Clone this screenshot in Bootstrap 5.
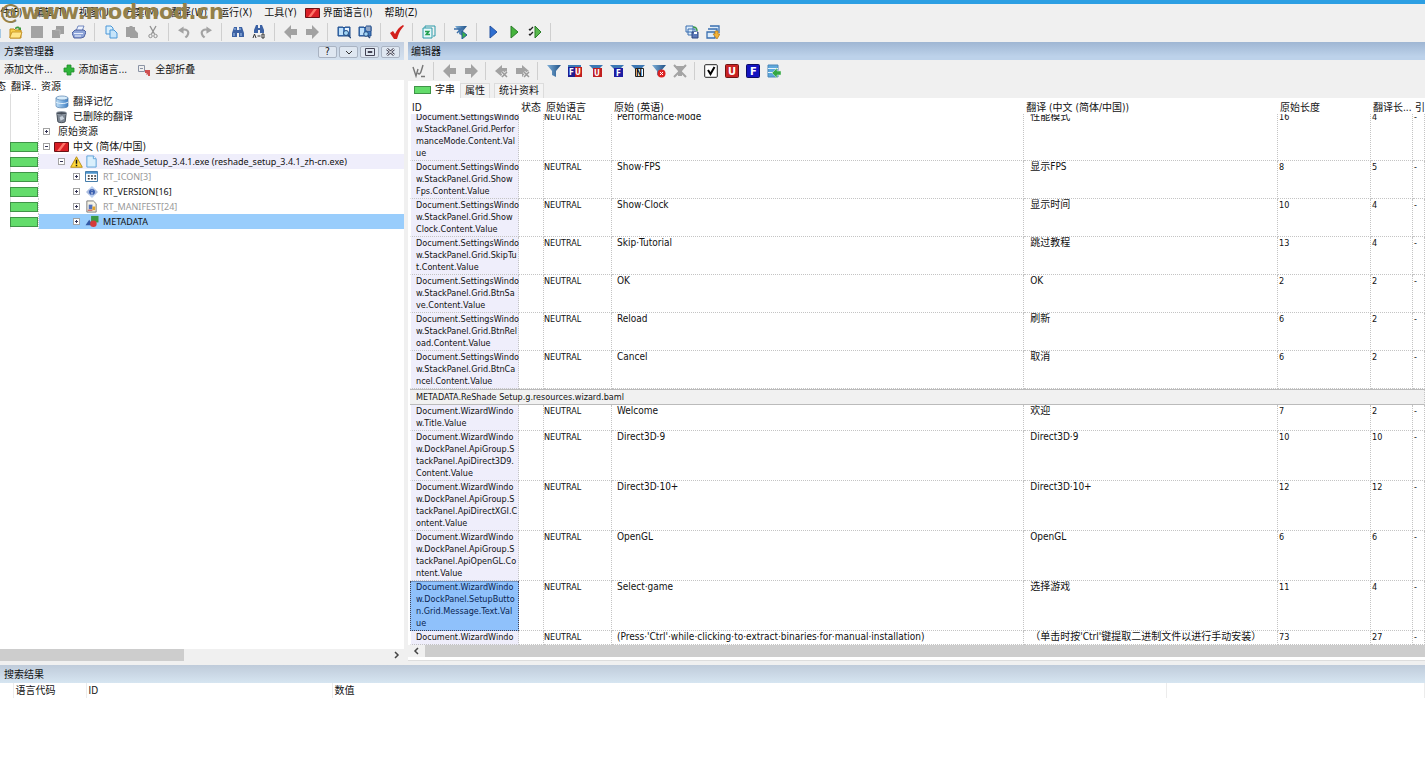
<!DOCTYPE html>
<html lang="zh-CN">
<head>
<meta charset="utf-8">
<meta name="viewport" content="width=device-width, initial-scale=1">
<title>方案管理器</title>
<link href="https://cdn.jsdelivr.net/npm/bootstrap@5.3.0/dist/css/bootstrap.min.css" rel="stylesheet">
<style>
body{font-family:"DejaVu Sans Condensed","Noto Sans CJK SC",sans-serif;font-size:10px;line-height:12px;color:#111;background:#f0f0f0}
button{font:inherit;color:inherit;border:0;background:none;padding:0;white-space:nowrap}
svg{display:block;flex:none}
.titlestrip{height:4px;background:#2d9fe3}
.menus{height:17px;gap:12px}
.menus a{color:#111;text-decoration:none;white-space:nowrap}
.menus a:first-child{margin-left:-10px}
.menus .flagged{margin-left:-4px;gap:3px}
.watermark{left:0;top:-4px;font:bold 21px/24px "DejaVu Sans",sans-serif;color:#93804a;pointer-events:none}
.tools{height:21px}
.tools button{width:21px;height:21px;display:flex;align-items:center;justify-content:center;flex:none}
.tools .bar{width:1px;height:18px;margin:0 5px 0 4px;background:#cfcfcf;flex:none}
.maintools{margin-left:-16px}
.maintools .bar{margin:0 5px}
.maintools .far{margin-right:130px}
.workspace{display:grid;grid-template-columns:404px minmax(0,1fr);column-gap:4px}
.caption{font-size:10px;height:18px;padding:2px 0 0 4px;background:linear-gradient(#c3cfe0,#d4e1ef);flex:none}
.caption.active-one{background:linear-gradient(#9fb6d3,#bdd2ea 80%);padding-left:3px}
.caption.low{background:linear-gradient(#bfcbda,#d6e5f1)}
.caption .wbtn{width:19px;height:12px;border:1px solid #a9b3c2;border-radius:2px;background:#dfe7f1;display:flex;align-items:center;justify-content:center}
.lefttools{height:20px;gap:10px}
.lefttools button{gap:4px}
.treehead{height:14px}
.treehead span{white-space:nowrap;overflow:hidden}
.tree{background:#fff;position:relative}
.node{height:15px}
.node .state{width:39px;padding-left:10px;flex:none;height:15px;border-right:1px dotted #ccc;background:linear-gradient(90deg,transparent 10px,#ddd 10px,#ddd 11px,transparent 11px);display:flex;align-items:center}
.green{display:block;width:28px;height:10px;background:#63dc6b;border:1px solid #3f9447}
.green.short{width:17px;height:8px}
.node .body{height:15px;min-width:0}
.node.soft .body{background:#efeefb}
.node.sel .body{background:#99cdfc}
.cell{width:15px;flex:none;display:flex;justify-content:center}
.lbl{white-space:nowrap;padding-left:4px}
.latin{font-family:"Noto Sans","Noto Sans CJK SC",sans-serif;font-size:9px}
.dim{color:#999}
.exp{width:7px;height:7px;border:1px solid #a3a3a3;display:block;position:relative;background:#fff}
.exp::before{content:"";position:absolute;left:1px;right:1px;top:2px;height:1px;background:#335}
.exp.plus::after{content:"";position:absolute;top:1px;bottom:1px;left:2px;width:1px;background:#335}
.scroller{height:12px;background:#f0f0f0;flex:none}
.thumb{background:#cdcdcd;height:12px}
.tabs{height:17px}
.tabs button{height:15px;padding:0 4px;border:1px solid #dcdcdc;border-bottom:0;background:#f3f3f3}
.tabs button.on{height:17px;background:#fff;border-color:#fff;padding:0 4px 0 5px;display:flex;gap:4px;align-items:center}
.gridwrap{overflow:hidden;background:#fff;padding-left:2px}
.strings{table-layout:fixed;width:100%;border-collapse:separate;border-spacing:0}
.strings th{position:sticky;top:0;background:#fff;font-weight:400;height:16px;padding:4px 0 0 2px;line-height:12px;white-space:nowrap;overflow:hidden;z-index:1}
.strings td{vertical-align:top;padding:0 0 1px;border-bottom:1px dotted #c4c4c4;border-right:1px dotted #c4c4c4;font-size:9px;line-height:12px;white-space:nowrap;overflow:hidden}
.strings td:nth-child(1){background:#efeefb;padding-left:5px;border-left:1px solid #fff;overflow:visible}
.strings td:nth-child(2){overflow:visible}
.strings td:nth-child(4),.strings td:nth-child(5){font-size:10px;padding-left:5px}
.strings td:nth-child(5){padding-left:6px}
.strings td:nth-child(n+6){padding-left:1px}
.strings tr.pick td:nth-child(1){background:#8fc1fb;box-shadow:inset 0 1px #6b8fc0;border:1px dotted #445;border-top:0;color:#0a2450}
.strings tr.group td{background:#f1f1f1;border-top:1px solid #bbb;border-bottom:1px solid #bbb;padding:1px 0 1px 6px;border-left:0}
.panelend{height:4px;background:#fff;margin-bottom:4px;border-bottom:1px solid #ddd;flex:none}
.results{height:113px;background:#fff}
.found{table-layout:fixed;width:100%;background:#fff}
.found th{font-weight:400;padding:0 0 0 2px;height:15px;white-space:nowrap;border-right:1px solid #ececec}
</style>
</head>
<body class="vh-100 d-flex flex-column overflow-hidden">
<svg width="0" height="0" class="position-absolute" aria-hidden="true">
 <defs>
 <linearGradient id="gb" x1="0" x2="1"><stop offset="0" stop-color="#bfe0f8"/><stop offset="1" stop-color="#3f7fc4"/></linearGradient>
 <linearGradient id="gf" x1="0" x2="1"><stop offset="0" stop-color="#7fb0d8"/><stop offset="1" stop-color="#1d4f86"/></linearGradient>
 <symbol id="doc" viewBox="0 0 14 14"><path d="M2 1h7l3 3v9H2z" fill="#d9effc" stroke="#5aa0d8"/><path d="M9 1v3h3" fill="#fff" stroke="#5aa0d8"/></symbol>
 <symbol id="open" viewBox="0 0 14 14"><path d="M1 4h4l1 1h6v8H1z" fill="#f7cf4a" stroke="#c08a1c"/><path d="M1 12l2-5h10l-2 6H1z" fill="#ffe68a" stroke="#c08a1c" stroke-width=".8"/><path d="M6 4c0-3 4-3 5-1l1-1v3H9l1-1c-1-1-2-1-3 0z" fill="#3f9a3f"/></symbol>
 <symbol id="save" viewBox="0 0 14 14"><path d="M1 1h12v12H1z" fill="#a3a3a3"/></symbol>
 <symbol id="saveall" viewBox="0 0 14 14"><path d="M5 1h8v8H9v4H1V5h4z" fill="#a0a0a0"/><path d="M4 5h5v5" fill="none" stroke="#b4b4b4"/></symbol>
 <symbol id="print" viewBox="0 0 14 14"><path d="M4 6l2-5h6l-2 5z" fill="#eef4ff" stroke="#5570b0" stroke-width=".8"/><path d="M0 8l3-3h9l2 2-2 5-3 1H2z" fill="#8fa5d8" stroke="#43589a" stroke-width=".9"/><path d="M2 8.500h9M3 11h6" stroke="#e8eefc"/></symbol>
 <symbol id="copy" viewBox="0 0 14 14"><path d="M2 1h5l2 2v6H2z" fill="#d9effc" stroke="#4a97d8"/><path d="M6 5h4l3 3v5H6z" fill="#c6e4fa" stroke="#4a97d8"/></symbol>
 <symbol id="paste" viewBox="0 0 14 14"><path d="M1 2h3l1-1h2l1 1h2v3l3 3v5H5v-1H1z" fill="#a0a0a0"/></symbol>
 <symbol id="cut" viewBox="0 0 14 14"><path d="M4 1l4.500 8M10 1L5.500 9" stroke="#909090" stroke-width="1.300"/><circle cx="4.500" cy="11" r="1.700" fill="none" stroke="#909090"/><circle cx="9.500" cy="11" r="1.700" fill="none" stroke="#909090"/></symbol>
 <symbol id="undo" viewBox="0 0 14 14"><path d="M3 5c6-2 10 1 7 6l-2 2" fill="none" stroke="#a3a3a3" stroke-width="2.300"/><path d="M0 5l6-4v8z" fill="#a3a3a3"/></symbol>
 <symbol id="redo" viewBox="0 0 14 14"><path d="M11 5c-6-2-10 1-7 6l2 2" fill="none" stroke="#a3a3a3" stroke-width="2.300"/><path d="M14 5L8 1v8z" fill="#a3a3a3"/></symbol>
 <symbol id="find" viewBox="0 0 14 14"><path d="M3 2h3v3h2V2h3l2 6v4H8V8H6v4H1V8z" fill="#3c62a4"/><path d="M3 8v3M10 8v3M4 3v2M9 3v2" stroke="#a9c8f0"/></symbol>
 <symbol id="findab" viewBox="0 0 14 14"><path d="M4 0h2v3h2V0h2l2 5v3H8V5H6v3H2V5z" fill="#3c62a4"/><path d="M1 13l1.500-4L4 13M5.500 11h3M10 9v4h2V9z" fill="none" stroke="#333"/></symbol>
 <symbol id="left" viewBox="0 0 14 14"><path d="M0 7l7-7v4h6v6H7v4z" fill="#a2a2a2"/></symbol>
 <symbol id="right" viewBox="0 0 14 14"><path d="M14 7L7 0v4H1v6h6v4z" fill="#a2a2a2"/></symbol>
 <symbol id="leftx" viewBox="0 0 14 14"><path d="M0 7l7-6v3h5v6H7v3z" fill="#a2a2a2"/><path d="M7 8l5 5M12 8l-5 5" stroke="#f0f0f0" stroke-width="3"/><path d="M7 8l5 5M12 8l-5 5" stroke="#999" stroke-width="1.500"/></symbol>
 <symbol id="rightx" viewBox="0 0 14 14"><path d="M13 7L6 1v3H0v6h6v3z" fill="#a2a2a2"/><path d="M8 8l5 5M13 8l-5 5" stroke="#f0f0f0" stroke-width="3"/><path d="M8 8l5 5M13 8l-5 5" stroke="#999" stroke-width="1.500"/></symbol>
 <symbol id="book" viewBox="0 0 14 14"><path d="M1 2h5l1 1 1-1h5v9H1z" fill="#3f78bd" stroke="#234f8c"/><path d="M2 3h4v7H2z" fill="#bfe0fa"/><path d="M8 3h4v5H8z" fill="#e9f4ff"/><circle cx="9" cy="8" r="2.500" fill="#9ed4f6" stroke="#25497c"/><path d="M11 10l3 3" stroke="#25497c" stroke-width="1.500"/></symbol>
 <symbol id="book2" viewBox="0 0 14 14"><path d="M1 2h5l1 1 1-1h5v9H1z" fill="#3f78bd" stroke="#234f8c"/><path d="M2 3h4v7H2z" fill="#bfe0fa"/><path d="M8 1h5v5H8z" fill="#fff" stroke="#234f8c"/><path d="M10 1v4M12 1v4" stroke="#234f8c"/><circle cx="8" cy="9" r="2.300" fill="#9ed4f6" stroke="#25497c"/><path d="M10 11l2 2" stroke="#25497c" stroke-width="1.500"/></symbol>
 <symbol id="tick" viewBox="0 0 14 14"><path d="M0 8l3-2 2 3C7 5 9 2 13 0l1 1c-4 4-5 7-7 13H4z" fill="#d3201c"/></symbol>
 <symbol id="sync" viewBox="0 0 14 14"><path d="M1 3h9v10H1z" fill="#e4f8fa" stroke="#2a9aa8"/><path d="M3 3V1h10v10h-2" fill="none" stroke="#2a9aa8"/><path d="M3 6.500h4L5 9M8 9.500H4l2-2.500" fill="none" stroke="#24a050" stroke-width="1.300"/></symbol>
 <symbol id="fplus" viewBox="0 0 14 14"><path d="M1 1h12L9 6v5L5 9V6z" fill="url(#gf)"/><path d="M0 4h6M3 8l5-5" stroke="#3c6fa8" stroke-width="1.500"/><path d="M8 6l5 4-5 4z" fill="#39b04a" stroke="#245c9a"/></symbol>
 <symbol id="playb" viewBox="0 0 14 14"><path d="M4 1l7 6-7 6z" fill="#2f6fd0" stroke="#2452a0"/></symbol>
 <symbol id="playg" viewBox="0 0 14 14"><path d="M4 1l7 6-7 6z" fill="#45b43c" stroke="#2a7d28"/></symbol>
 <symbol id="playm" viewBox="0 0 14 14"><path d="M7 1l6 6-6 6z" fill="#58b84c" stroke="#2a7d28"/><path d="M1 4l1 1 3-3M1 9l1 1 3-3" fill="none" stroke="#222" stroke-width="1.300"/></symbol>
 <symbol id="winsave" viewBox="0 0 14 14"><path d="M1 1h7v6H1zM3 4h7v6H3z" fill="#dcecfb" stroke="#3a6fb0"/><path d="M8 2c3 0 4 1 4 4" fill="none" stroke="#3a9a48" stroke-width="1.500"/><path d="M7 7h6v6H7z" fill="#5c79b8" stroke="#2c4680"/><path d="M9 7h3v2H9z" fill="#fff"/></symbol>
 <symbol id="wins" viewBox="0 0 14 14"><path d="M4 1h9v7M2 4h9v7M1 7h8v6H1z" fill="#dcecfb" stroke="#3a6fb0" stroke-width="1.300"/><path d="M9 6v3H7l4 5 3-5h-2V6z" fill="#f2b238" stroke="#b47a18" stroke-width=".7"/></symbol>
 <symbol id="flag" viewBox="0 0 15 10"><path d="M.5.500h14v9H.5z" fill="#d91f26" stroke="#6a1216"/><path d="M3 9l6-8h3L6 9z" fill="#ff7468"/></symbol>
 <symbol id="plus" viewBox="0 0 12 12"><path d="M4 1h4v3h3v4H8v3H4V8H1V4h3z" fill="#2fb53a" stroke="#1e8a2c" stroke-width=".8"/></symbol>
 <symbol id="fold" viewBox="0 0 14 12"><path d="M1.500 1.500h6v6h-6zM3 4.500h3" fill="none" stroke="#8a93a5"/><path d="M8 6h5v6h-2v-2l-1 1-1-1 1-1H8z" fill="#d05050"/></symbol>
 <symbol id="db" viewBox="0 0 14 14"><path d="M1 3v8c0 2.500 12 2.500 12 0V3z" fill="url(#gb)" stroke="#5580ad" stroke-width=".7"/><ellipse cx="7" cy="3" rx="6" ry="2" fill="#d8ecfa" stroke="#5580ad" stroke-width=".7"/><path d="M1 7c2 2 10 2 12 0" fill="none" stroke="#e4f2fc"/></symbol>
 <symbol id="bin" viewBox="0 0 14 14"><path d="M2 3l1 9c1 1.500 7 1.500 8 0l1-9z" fill="#7d8793" stroke="#3f4852"/><ellipse cx="7" cy="3" rx="5.500" ry="1.800" fill="#454d58" stroke="#99a3af"/><path d="M5 7l3-1 2 3-4 2z" fill="#c9d2dc"/></symbol>
 <symbol id="warn" viewBox="0 0 14 13"><path d="M7 .8l6.300 11.400H.7z" fill="#ffd83a" stroke="#b58a10"/><path d="M7 4v4.500M7 9.500V11" stroke="#111" stroke-width="1.600"/></symbol>
 <symbol id="cal" viewBox="0 0 14 12"><path d="M.5.500h13v11H.5z" fill="#fff" stroke="#2d6ca0"/><path d="M1 1h12v2H1z" fill="#4c94cc"/><path d="M3 5.500h9M3 8.500h9" stroke="#333" stroke-width="1.500" stroke-dasharray="2 1.500"/></symbol>
 <symbol id="ver" viewBox="0 0 14 14"><path d="M7 0l3 3v8l-3 3-3-3V3z" fill="#b8cdf0"/><path d="M0 7l4-4v8zM14 7l-4-4v8z" fill="#a9bbdf"/><circle cx="7" cy="7" r="3.500" fill="#3c60b0"/><path d="M7 4.500v1M7 7v3" stroke="#fff"/></symbol>
 <symbol id="mani" viewBox="0 0 14 14"><path d="M2 1h7l3 3v9H2z" fill="#f6f3e6" stroke="#777"/><path d="M4 5h4v5H4z" fill="#5272bd"/><path d="M8 7h3v4H8z" fill="#e0a32c"/><path d="M3 11h5" stroke="#b33"/></symbol>
 <symbol id="meta" viewBox="0 0 14 14"><path d="M6 1h8v7H6z" fill="#3b9a45"/><path d="M0 11l4-6 4 6z" fill="#3459a5"/><circle cx="8.500" cy="9.500" r="3.500" fill="#d33b3b"/></symbol>
 <symbol id="check2" viewBox="0 0 14 14"><path d="M1 3l3 9 2-7M6 9c2 3 3-1 5-8M9 12.500h4" fill="none" stroke="#777" stroke-width="1.400"/></symbol>
 <symbol id="funnel" viewBox="0 0 14 14"><path d="M0 1h14L9 7v6l-4-2V7z" fill="url(#gf)"/></symbol>
 <symbol id="f2" viewBox="0 0 14 14"><path d="M0 1h14L9 6H5z" fill="#3c78b4"/></symbol>
 <symbol id="fdel" viewBox="0 0 14 14"><use href="#funnel"/><circle cx="9.500" cy="9.500" r="4" fill="#dc2222"/><path d="M8 8l3 3M11 8l-3 3" stroke="#fff"/></symbol>
 <symbol id="fgray" viewBox="0 0 14 14"><path d="M1 2h12L9 7v5H5V7z" fill="#a4a4a4"/><path d="M1 1l12 12M13 1L1 13" stroke="#a4a4a4" stroke-width="2"/></symbol>
 <symbol id="cbx" viewBox="0 0 14 14"><rect x=".7" y=".7" width="12.600" height="12.600" rx="1" fill="#fff" stroke="#222"/><path d="M4 6l2.500 4L10.500 3" fill="none" stroke="#000" stroke-width="2"/></symbol>
 <symbol id="dbg" viewBox="0 0 14 14"><path d="M1 1h10v12H1z" fill="#5fa8dc" stroke="#4a86b8"/><path d="M1 4.500h10M1 8.500h10" stroke="#e6f4fd"/><path d="M5 9l5-5v3h4v4h-4v3z" fill="#35a845" stroke="#d8f0d8" stroke-width=".5"/></symbol>
 </defs>
</svg>

<div class="titlestrip flex-shrink-0"></div>
<nav class="menus d-flex align-items-center position-relative flex-shrink-0" aria-label="菜单">
 <a href="#">文件(F)</a><a href="#">编辑(T)</a><a href="#">视图(U)</a><a href="#">方案(M)</a><a href="#">翻译(W)</a><a href="#">运行(X)</a><a href="#">工具(Y)</a>
 <a href="#" class="flagged d-flex align-items-center"><svg width="15" height="10"><use href="#flag"/></svg>界面语言(I)</a><a href="#">帮助(Z)</a>
 <span class="watermark position-absolute">@www.modmod.cn</span>
</nav>

<div class="tools maintools d-flex align-items-center flex-shrink-0" role="toolbar" aria-label="主工具栏">
 <button aria-label="新建"><svg width="14" height="14"><use href="#doc"/></svg></button>
 <button aria-label="打开"><svg width="14" height="14"><use href="#open"/></svg></button>
 <button aria-label="保存"><svg width="14" height="14"><use href="#save"/></svg></button>
 <button aria-label="全部保存"><svg width="14" height="14"><use href="#saveall"/></svg></button>
 <button aria-label="打印"><svg width="14" height="14"><use href="#print"/></svg></button><i class="bar"></i>
 <button aria-label="复制"><svg width="14" height="14"><use href="#copy"/></svg></button>
 <button aria-label="粘贴"><svg width="14" height="14"><use href="#paste"/></svg></button>
 <button aria-label="剪切"><svg width="14" height="14"><use href="#cut"/></svg></button><i class="bar"></i>
 <button aria-label="撤销"><svg width="13" height="14"><use href="#undo"/></svg></button>
 <button aria-label="重做"><svg width="13" height="14"><use href="#redo"/></svg></button><i class="bar"></i>
 <button aria-label="查找"><svg width="14" height="14"><use href="#find"/></svg></button>
 <button aria-label="替换"><svg width="14" height="14"><use href="#findab"/></svg></button><i class="bar"></i>
 <button aria-label="后退"><svg width="14" height="14"><use href="#left"/></svg></button>
 <button aria-label="前进"><svg width="14" height="14"><use href="#right"/></svg></button><i class="bar"></i>
 <button aria-label="词典"><svg width="14" height="14"><use href="#book"/></svg></button>
 <button aria-label="词典保存"><svg width="14" height="14"><use href="#book2"/></svg></button><i class="bar"></i>
 <button aria-label="检查"><svg width="14" height="14"><use href="#tick"/></svg></button><i class="bar"></i>
 <button aria-label="更新"><svg width="14" height="14"><use href="#sync"/></svg></button><i class="bar"></i>
 <button aria-label="筛选翻译"><svg width="14" height="14"><use href="#fplus"/></svg></button><i class="bar"></i>
 <button aria-label="运行原始"><svg width="14" height="14"><use href="#playb"/></svg></button>
 <button aria-label="运行翻译"><svg width="14" height="14"><use href="#playg"/></svg></button>
 <button aria-label="运行检查"><svg width="14" height="14"><use href="#playm"/></svg></button><i class="bar far"></i>
 <button aria-label="保存布局"><svg width="14" height="14"><use href="#winsave"/></svg></button>
 <button aria-label="窗口"><svg width="14" height="14"><use href="#wins"/></svg></button>
</div>

<main class="workspace flex-grow-1 overflow-hidden">
 <section class="d-flex flex-column overflow-hidden">
  <div class="caption d-flex align-items-center">
   <span class="me-auto">方案管理器</span>
   <span class="d-flex me-1" style="gap:2px">
    <button class="wbtn" aria-label="帮助">?</button>
    <button class="wbtn" aria-label="菜单"><svg width="8" height="5"><path d="M1 1l3 3 3-3" fill="none" stroke="#333"/></svg></button>
    <button class="wbtn" aria-label="最大化"><svg width="10" height="8"><path d="M.5.500h9v7h-9zM3 3.500h4v1H3z" fill="none" stroke="#445"/></svg></button>
    <button class="wbtn" aria-label="关闭"><svg width="9" height="8"><path d="M1 1l7 6M8 1L1 7" stroke="#445" stroke-width="2.500"/><path d="M1 1l7 6M8 1L1 7" stroke="#fff"/></svg></button>
   </span>
  </div>
  <div class="lefttools d-flex align-items-center flex-shrink-0 ps-1" role="toolbar" aria-label="方案">
   <button>添加文件...</button>
   <button class="d-flex align-items-center"><svg width="12" height="12"><use href="#plus"/></svg>添加语言...</button>
   <button class="d-flex align-items-center"><svg width="14" height="12"><use href="#fold"/></svg>全部折叠</button>
  </div>
  <div class="tree flex-grow-1 overflow-hidden" role="tree">
   <div class="treehead d-flex align-items-center"><span style="width:11px;text-indent:-4px">态</span><span style="width:30px">翻译..</span><span>资源</span></div>
   <div class="node d-flex"><span class="state"></span><div class="body d-flex align-items-center"><span class="cell"></span><span class="cell"><svg width="14" height="14"><use href="#db"/></svg></span><span class="lbl">翻译记忆</span></div></div>
   <div class="node d-flex"><span class="state"></span><div class="body d-flex align-items-center"><span class="cell"></span><span class="cell"><svg width="13" height="14"><use href="#bin"/></svg></span><span class="lbl">已删除的翻译</span></div></div>
   <div class="node d-flex"><span class="state"></span><div class="body d-flex align-items-center"><span class="cell"><i class="exp plus"></i></span><span class="lbl">原始资源</span></div></div>
   <div class="node d-flex"><span class="state"><i class="green"></i></span><div class="body d-flex align-items-center"><span class="cell"><i class="exp"></i></span><span class="cell"><svg width="15" height="10"><use href="#flag"/></svg></span><span class="lbl">中文 (简体/中国)</span></div></div>
   <div class="node soft d-flex"><span class="state"><i class="green"></i></span><div class="body d-flex align-items-center flex-grow-1"><span class="cell"></span><span class="cell"><i class="exp"></i></span><span class="cell"><svg width="13" height="12"><use href="#warn"/></svg></span><span class="cell"><svg width="13" height="13"><use href="#doc"/></svg></span><span class="lbl latin">ReShade_Setup_3.4.1.exe (reshade_setup_3.4.1_zh-cn.exe)</span></div></div>
   <div class="node d-flex"><span class="state"><i class="green"></i></span><div class="body d-flex align-items-center"><span class="cell"></span><span class="cell"></span><span class="cell"><i class="exp plus"></i></span><span class="cell"><svg width="13" height="11"><use href="#cal"/></svg></span><span class="lbl latin dim">RT_ICON[3]</span></div></div>
   <div class="node d-flex"><span class="state"><i class="green"></i></span><div class="body d-flex align-items-center"><span class="cell"></span><span class="cell"></span><span class="cell"><i class="exp plus"></i></span><span class="cell"><svg width="12" height="12"><use href="#ver"/></svg></span><span class="lbl latin">RT_VERSION[16]</span></div></div>
   <div class="node d-flex"><span class="state"><i class="green"></i></span><div class="body d-flex align-items-center"><span class="cell"></span><span class="cell"></span><span class="cell"><i class="exp plus"></i></span><span class="cell"><svg width="13" height="13"><use href="#mani"/></svg></span><span class="lbl latin dim">RT_MANIFEST[24]</span></div></div>
   <div class="node sel d-flex"><span class="state"><i class="green"></i></span><div class="body d-flex align-items-center flex-grow-1"><span class="cell"></span><span class="cell"></span><span class="cell"><i class="exp plus"></i></span><span class="cell"><svg width="14" height="13"><use href="#meta"/></svg></span><span class="lbl latin">METADATA</span></div></div>
  </div>
  <div class="scroller d-flex align-items-center justify-content-between pe-1 mb-1"><div class="thumb" style="width:46%"></div><svg width="6" height="8"><path d="M1 1l3 3-3 3" fill="none" stroke="#444" stroke-width="1.500"/></svg></div>
 </section>

 <section class="d-flex flex-column overflow-hidden">
  <div class="caption active-one d-flex align-items-center">编辑器</div>
  <div class="tools d-flex align-items-center flex-shrink-0" role="toolbar" aria-label="编辑器工具栏">
   <button aria-label="校验"><svg width="14" height="14"><use href="#check2"/></svg></button><i class="bar"></i>
   <button aria-label="上一个"><svg width="14" height="14"><use href="#left"/></svg></button>
   <button aria-label="下一个"><svg width="14" height="14"><use href="#right"/></svg></button><i class="bar"></i>
   <button aria-label="上一个未译"><svg width="14" height="14"><use href="#leftx"/></svg></button>
   <button aria-label="下一个未译"><svg width="14" height="14"><use href="#rightx"/></svg></button><i class="bar"></i>
   <button aria-label="筛选"><svg width="14" height="14"><use href="#funnel"/></svg></button>
   <button aria-label="筛选 FU"><svg width="15" height="14"><path d="M1 3h7v10H1z" fill="#1d1d92"/><path d="M8 3h7v10H8z" fill="#c01f1f"/><path d="M1 1h13v2H1z" fill="#3c78b4"/><text x="2" y="11" font-size="8" font-weight="bold" fill="#fff">F</text><text x="8" y="11" font-size="8" font-weight="bold" fill="#fff">U</text></svg></button>
   <button aria-label="筛选 U"><svg width="14" height="14"><use href="#f2"/><path d="M4 4h9v9H4z" fill="#c01f1f"/><text x="5" y="12" font-size="8" font-weight="bold" fill="#fff">U</text></svg></button>
   <button aria-label="筛选 F"><svg width="14" height="14"><use href="#f2"/><path d="M4 4h9v9H4z" fill="#1d1da2"/><text x="6" y="12" font-size="8" font-weight="bold" fill="#fff">F</text></svg></button>
   <button aria-label="筛选 N"><svg width="14" height="14"><use href="#f2"/><path d="M4.500 4.500h8v8h-8z" fill="#fff" stroke="#222"/><text x="5" y="12" font-size="8" font-weight="bold" fill="#111">N</text></svg></button>
   <button aria-label="清除筛选"><svg width="14" height="14"><use href="#fdel"/></svg></button>
   <button aria-label="关闭筛选"><svg width="14" height="14"><use href="#fgray"/></svg></button><i class="bar"></i>
   <button aria-label="标记完成"><svg width="14" height="14"><use href="#cbx"/></svg></button>
   <button aria-label="标记 U"><svg width="14" height="14"><rect x=".5" y=".5" width="13" height="13" rx="1" fill="#c92323" stroke="#6e1414"/><text x="3" y="11" font-size="11" font-weight="bold" fill="#fff">U</text></svg></button>
   <button aria-label="标记 F"><svg width="14" height="14"><rect x=".5" y=".5" width="13" height="13" rx="1" fill="#1414c0" stroke="#0c0c66"/><text x="4" y="11" font-size="11" font-weight="bold" fill="#fff">F</text></svg></button>
   <button aria-label="导入"><svg width="14" height="14"><use href="#dbg"/></svg></button>
  </div>
  <div class="tabs d-flex align-items-end flex-shrink-0" role="tablist">
   <button class="on" role="tab"><i class="green short"></i>字串</button><button role="tab">属性</button><button role="tab" class="ms-1">统计资料</button>
  </div>
  <div class="gridwrap flex-grow-1" id="grid">
   <table class="strings">
    <colgroup><col style="width:109px"><col style="width:25px"><col style="width:68px"><col><col style="width:25%"><col style="width:93px"><col style="width:42px"><col style="width:12px"></colgroup>
    <thead><tr><th>ID</th><th>状态</th><th>原始语言</th><th>原始 (英语)</th><th>翻译 (中文 (简体/中国))</th><th>原始长度</th><th>翻译长...</th><th>引</th></tr></thead>
    <tbody>
    <tr><td>Document.SettingsWindo<br>w.StackPanel.Grid.Perfor<br>manceMode.Content.Val<br>ue</td><td></td><td>NEUTRAL</td><td>Performance·Mode</td><td>性能模式</td><td>16</td><td>4</td><td>-</td></tr>
    <tr><td>Document.SettingsWindo<br>w.StackPanel.Grid.Show<br>Fps.Content.Value</td><td></td><td>NEUTRAL</td><td>Show·FPS</td><td>显示FPS</td><td>8</td><td>5</td><td>-</td></tr>
    <tr><td>Document.SettingsWindo<br>w.StackPanel.Grid.Show<br>Clock.Content.Value</td><td></td><td>NEUTRAL</td><td>Show·Clock</td><td>显示时间</td><td>10</td><td>4</td><td>-</td></tr>
    <tr><td>Document.SettingsWindo<br>w.StackPanel.Grid.SkipTu<br>t.Content.Value</td><td></td><td>NEUTRAL</td><td>Skip·Tutorial</td><td>跳过教程</td><td>13</td><td>4</td><td>-</td></tr>
    <tr><td>Document.SettingsWindo<br>w.StackPanel.Grid.BtnSa<br>ve.Content.Value</td><td></td><td>NEUTRAL</td><td>OK</td><td>OK</td><td>2</td><td>2</td><td>-</td></tr>
    <tr><td>Document.SettingsWindo<br>w.StackPanel.Grid.BtnRel<br>oad.Content.Value</td><td></td><td>NEUTRAL</td><td>Reload</td><td>刷新</td><td>6</td><td>2</td><td>-</td></tr>
    <tr><td>Document.SettingsWindo<br>w.StackPanel.Grid.BtnCa<br>ncel.Content.Value</td><td></td><td>NEUTRAL</td><td>Cancel</td><td>取消</td><td>6</td><td>2</td><td>-</td></tr>
    <tr class="group"><td colspan="8">METADATA.ReShade Setup.g.resources.wizard.baml</td></tr>
    <tr><td>Document.WizardWindo<br>w.Title.Value</td><td></td><td>NEUTRAL</td><td>Welcome</td><td>欢迎</td><td>7</td><td>2</td><td>-</td></tr>
    <tr><td>Document.WizardWindo<br>w.DockPanel.ApiGroup.S<br>tackPanel.ApiDirect3D9.<br>Content.Value</td><td></td><td>NEUTRAL</td><td>Direct3D·9</td><td>Direct3D·9</td><td>10</td><td>10</td><td>-</td></tr>
    <tr><td>Document.WizardWindo<br>w.DockPanel.ApiGroup.S<br>tackPanel.ApiDirectXGI.C<br>ontent.Value</td><td></td><td>NEUTRAL</td><td>Direct3D·10+</td><td>Direct3D·10+</td><td>12</td><td>12</td><td>-</td></tr>
    <tr><td>Document.WizardWindo<br>w.DockPanel.ApiGroup.S<br>tackPanel.ApiOpenGL.Co<br>ntent.Value</td><td></td><td>NEUTRAL</td><td>OpenGL</td><td>OpenGL</td><td>6</td><td>6</td><td>-</td></tr>
    <tr class="pick"><td>Document.WizardWindo<br>w.DockPanel.SetupButto<br>n.Grid.Message.Text.Val<br>ue</td><td></td><td>NEUTRAL</td><td>Select·game</td><td>选择游戏</td><td>11</td><td>4</td><td>-</td></tr>
    <tr><td>Document.WizardWindo</td><td></td><td>NEUTRAL</td><td>(Press·'Ctrl'·while·clicking·to·extract·binaries·for·manual·installation)</td><td>（单击时按'Ctrl'键提取二进制文件以进行手动安装）</td><td>73</td><td>27</td><td>-</td></tr>
    </tbody>
   </table>
  </div>
  <div class="scroller d-flex align-items-center"><svg class="mx-1" width="9" height="8"><path d="M6 1L3 4l3 3" fill="none" stroke="#444" stroke-width="1.500"/></svg><div class="thumb flex-grow-1"></div></div>
  <div class="panelend"></div>
 </section>
</main>

<section class="results flex-shrink-0">
 <div class="caption low d-flex align-items-center">搜索结果</div>
 <table class="found">
  <colgroup><col style="width:13px"><col style="width:73px"><col style="width:246px"><col style="width:834px"><col></colgroup>
  <thead><tr><th></th><th>语言代码</th><th>ID</th><th>数值</th><th></th></tr></thead>
 </table>
</section>
<script src="https://cdn.jsdelivr.net/npm/bootstrap@5.3.0/dist/js/bootstrap.bundle.min.js"></script>
<script>
// open the grid slightly scrolled, with the header row staying in place
document.getElementById('grid').scrollTop = 4;
</script>
</body>
</html>
